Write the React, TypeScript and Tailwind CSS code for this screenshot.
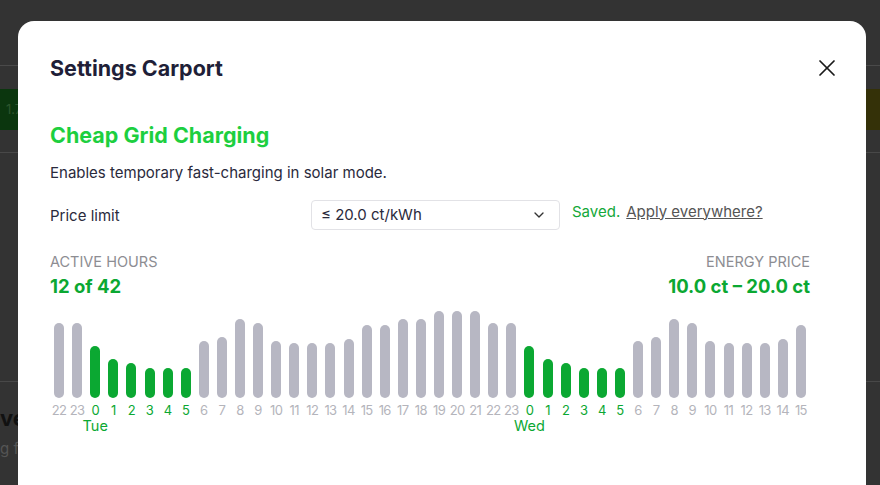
import { X, ChevronDown } from "lucide-react";

// price per hour, drawn as bar height in px
const bars = [
  75, 75, 52, 39, 35, 30, 30, 30, 57, 61, 79, 75, 57, 55, 55, 55, 59, 73, 73, 79, 79,
  87, 87, 87, 75, 75, 52, 39, 35, 30, 30, 30, 57, 61, 79, 75, 57, 55, 55, 55, 59, 73,
];

const hours = [22, 23, ...Array.from({ length: 24 }, (_, i) => i), ...Array.from({ length: 16 }, (_, i) => i)];

const days: Record<number, string> = { 2: "Tue", 26: "Wed" };

function HourBar({ h, hour, day }: { h: number; hour: number; day?: string }) {
  const active = hour <= 5;
  return (
    <div className="flex min-w-0 flex-1 flex-col items-center">
      <div className="flex h-[90px] items-end">
        <div
          className={active ? "w-[10px] rounded-full bg-[#0ba832]" : "w-[10px] rounded-full bg-[#b7b7c3]"}
          style={{ height: h }}
        />
      </div>
      <span
        className={
          active
            ? "mt-[4px] whitespace-nowrap text-[13px] leading-4 tracking-[-0.6px] text-[#0ba832]"
            : "mt-[4px] whitespace-nowrap text-[13px] leading-4 tracking-[-0.6px] text-[#b4b4bb]"
        }
      >
        {hour}
      </span>
      {day && <span className="whitespace-nowrap text-[14.5px] leading-4 text-[#0ba832]">{day}</span>}
    </div>
  );
}

export default function App() {
  return (
    <div className="relative h-[485px] w-[880px] overflow-hidden bg-[#333333] font-[Inter,sans-serif]">
      {/* Dimmed page behind the dialog */}
      <div className="h-[66px] border-b border-[#4a4a4a]" />
      <div className="mt-[23px] flex h-[41px]">
        <div className="flex flex-1 items-center bg-[#0b360e] pl-[6px] text-[13px] text-[#2d552d]">1.7</div>
        <div className="flex-1 bg-[#343108]" />
      </div>
      <div className="mt-[22px] h-[230px] border-y border-[#484848]" />
      <div className="mt-[22px] whitespace-nowrap text-[22px] font-bold leading-7 text-[#111111]">ve</div>
      <div className="mt-[6px] whitespace-nowrap text-[15px] text-[#555555]">g fo</div>

      {/* Dialog */}
      <div className="absolute left-[18px] top-[21px] h-[500px] w-[848px] rounded-2xl bg-white px-8 pt-[33px] text-[#2a2a3c]">
        <div className="flex items-center justify-between">
          <h2 className="text-[21.5px] font-bold leading-7 text-[#1f1f38]">Settings Carport</h2>
          <button className="-mr-[7px] text-[#1a1a1a]">
            <X size={28} strokeWidth={1.5} />
          </button>
        </div>

        <div className="pr-6">
          <h3 className="mt-[39px] text-[21.5px] font-bold leading-7 text-[#1dcf3f]">Cheap Grid Charging</h3>
          <p className="mt-[14px] text-[15px] leading-5">Enables temporary fast-charging in solar mode.</p>

          <div className="mt-[17px] flex items-center">
            <span className="mt-[2px] w-[261px] text-[15px]">Price limit</span>
            <div className="flex h-[30px] w-[249px] items-center justify-between rounded-[4px] border border-[#e2e2e6] pl-[9px] pr-[12px] text-[15px]">
              <span>≤ 20.0 ct/kWh</span>
              <ChevronDown size={16} strokeWidth={2} className="text-[#333333]" />
            </div>
            <span className="ml-[12px] -mt-[6px] text-[15px] text-[#14a83a]">Saved.</span>
            <span className="ml-[6px] -mt-[6px] text-[15px] text-[#555555] underline">Apply everywhere?</span>
          </div>

          <div className="mt-[23px] flex items-start justify-between">
            <div>
              <div className="text-[14.5px] leading-[18px] text-[#8d8d92]">ACTIVE HOURS</div>
              <div className="mt-[3px] text-[18.5px] font-bold leading-6 text-[#0ba832]">12 of 42</div>
            </div>
            <div className="text-right">
              <div className="text-[14.5px] leading-[18px] text-[#8d8d92]">ENERGY PRICE</div>
              <div className="mt-[3px] text-[18.5px] font-bold leading-6 text-[#0ba832]">10.0 ct – 20.0 ct</div>
            </div>
          </div>

          <div className="mt-[10px] flex">
            {bars.map((h, i) => (
              <HourBar key={i} h={h} hour={hours[i]} day={days[i]} />
            ))}
          </div>
        </div>
      </div>
    </div>
  );
}
